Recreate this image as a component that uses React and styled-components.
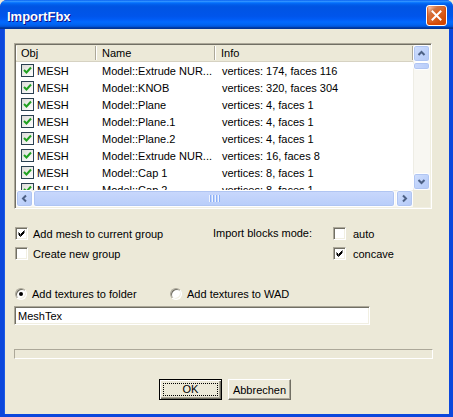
import React from "react";
import styled, { createGlobalStyle } from "styled-components";

const Global = createGlobalStyle`
  html, body { margin: 0; padding: 0; background: #ECE9D8; }
  body {
    font-family: "Liberation Sans", Arial, sans-serif;
    font-size: 11px;
    color: #000;
  }
`;

const FACE = "#ECE9D8";
const SHADOW = "#ACA899";
const DARK = "#716F64";

const Window = styled.div`
  width: 453px;
  height: 417px;
  box-sizing: border-box;
  display: flex;
  flex-direction: column;
  border-radius: 7px 7px 0 0;
  overflow: hidden;
  background: #0831d9;
`;

const TitleBar = styled.div`
  height: 29px;
  flex: none;
  box-sizing: border-box;
  display: flex;
  align-items: center;
  justify-content: space-between;
  padding: 1px 6px 0 7px;
  background: linear-gradient(
    to bottom,
    #0058ee 0%,
    #3593ff 4%,
    #288eff 6%,
    #127dff 8%,
    #036ffc 10%,
    #0262ee 14%,
    #0057e5 20%,
    #0054e3 24%,
    #0055eb 56%,
    #005bf5 66%,
    #026afe 76%,
    #0062ef 86%,
    #0052d6 92%,
    #0040ab 94%,
    #003092 100%
  );
`;

const Title = styled.span`
  font: bold 13px "Liberation Sans", Arial, sans-serif;
  color: #fff;
  text-shadow: 1px 1px #0f1089;
  margin-top: 2px;
`;

const CloseButton = styled.div`
  width: 21px;
  height: 21px;
  box-sizing: border-box;
  border: 1px solid #fff;
  border-radius: 3px;
  display: flex;
  align-items: center;
  justify-content: center;
  background: radial-gradient(
    circle at 90% 90%,
    #cc4600 0%,
    #dc6527 55%,
    #cd7546 70%,
    #ffccb2 90%,
    #fff 100%
  );
  box-shadow: inset 0 -1px 2px 1px #da4600;
`;

const Client = styled.div`
  flex: 1;
  background: ${FACE};
  border-style: solid;
  border-color: #0b47dc;
  border-width: 0 4px 3px 4px;
  box-shadow: inset 1px 0 #1a5ae6;
  padding: 14px 17px 0 10px;
  display: flex;
  flex-direction: column;
`;

/* ---------- list view ---------- */

const ListView = styled.div`
  width: 418px;
  height: 166px;
  box-sizing: border-box;
  border-style: solid;
  border-width: 1px;
  border-color: ${SHADOW} #fff #fff ${SHADOW};
  box-shadow: inset 1px 1px ${DARK}, inset -1px -1px #f1efe2;
  padding: 1px;
  display: grid;
  grid-template-columns: 1fr 17px;
  grid-template-rows: 1fr 17px;
  background: #fff;
`;

const Table = styled.div`
  overflow: hidden;
  background: #fff;
`;

const COLS = "80px 119px 198px";

const HeaderRow = styled.div`
  display: grid;
  grid-template-columns: ${COLS};
  height: 17px;
  box-sizing: border-box;
  background: ${FACE};
  border-bottom: 1px solid #d6d2c2;
`;

const HeaderCell = styled.div`
  display: flex;
  align-items: center;
  padding-left: ${(p) => p.$pad}px;
  border-right: 1px solid ${SHADOW};
  box-shadow: inset 1px 0 #fff;
  margin: 1px 0;
`;

const Row = styled.div`
  display: grid;
  grid-template-columns: ${COLS};
  height: 17px;
  align-items: center;
`;

const Cell = styled.div`
  display: flex;
  align-items: center;
  gap: 3px;
  padding-left: ${(p) => p.$pad}px;
  white-space: nowrap;
  overflow: hidden;
`;

const ListCheck = styled.span`
  width: 13px;
  height: 13px;
  flex: none;
  box-sizing: border-box;
  border: 1px solid #2a4050;
  background: linear-gradient(135deg, #dcdcd7, #fff);
  display: flex;
  align-items: center;
  justify-content: center;
`;

/* ---------- scroll bars ---------- */

const VScroll = styled.div`
  display: flex;
  flex-direction: column;
  background: #f8f7f2;
  box-shadow: inset 1px 0 #eeede5;
`;

const HScroll = styled.div`
  display: flex;
  background: #f8f7f2;
  box-shadow: inset 0 1px #eeede5;
`;

const Corner = styled.div`
  background: ${FACE};
`;

const ScrollButton = styled.div`
  width: 17px;
  height: 17px;
  flex: none;
  box-sizing: border-box;
  border: 1px solid #fff;
  display: flex;
  align-items: center;
  justify-content: center;
  border-radius: 3px;
  background: linear-gradient(135deg, #d2e0fd 0%, #c0d3fb 50%, #b4c8f6 100%);
  box-shadow: inset 0 0 0 1px #b0c5f2;
`;

const Thumb = styled.div`
  box-sizing: border-box;
  border: 1px solid #fff;
  border-radius: 3px;
  background: ${(p) =>
    p.$vertical
      ? "linear-gradient(to right, #c9d8fc, #b8cdfa)"
      : "linear-gradient(to bottom, #c9d8fc, #b8cdfa)"};
  box-shadow: inset 0 0 0 1px #b0c5f2;
  display: flex;
  align-items: center;
  justify-content: center;
  gap: 1px;
  ${(p) =>
    p.$vertical
      ? "height: 8px; width: 17px;"
      : "flex: 1; height: 17px; margin-right: 1px;"}
`;

const Grip = styled.span`
  width: 1px;
  height: 7px;
  background: #eef4fe;
  box-shadow: 1px 0 #8cb0f8;
  margin-right: 1px;
`;

const Track = styled.div`
  flex: 1;
`;

/* ---------- option controls ---------- */

const Options = styled.div`
  display: flex;
  margin-top: 18px;
  margin-left: 1px;
`;

const Column = styled.div`
  display: flex;
  flex-direction: column;
  gap: 7px;
  width: ${(p) => (p.$width ? `${p.$width}px` : "auto")};
`;

const GroupLabel = styled.div`
  width: 120px;
  height: 13px;
  line-height: 13px;
`;

const CheckField = styled.label`
  display: flex;
  align-items: center;
  gap: ${(p) => p.$gap}px;
  height: 13px;
  white-space: nowrap;
`;

const ClassicBox = styled.span`
  width: 13px;
  height: 13px;
  flex: none;
  box-sizing: border-box;
  background: #fff;
  border-style: solid;
  border-width: 1px;
  border-color: ${SHADOW} #fff #fff ${SHADOW};
  box-shadow: inset 1px 1px ${DARK}, inset -1px -1px #f1efe2;
  display: flex;
  align-items: center;
  justify-content: center;
`;

const RadioRow = styled.div`
  display: flex;
  margin-top: 28px;
  margin-left: 1px;
  height: 12px;
`;

const RadioField = styled.label`
  display: flex;
  align-items: center;
  gap: 5px;
  width: ${(p) => p.$width}px;
  white-space: nowrap;
`;

const RadioCircle = styled.span`
  width: 12px;
  height: 12px;
  flex: none;
  box-sizing: border-box;
  border-radius: 50%;
  background: #fff;
  border-style: solid;
  border-width: 1px;
  border-color: ${SHADOW} #fff #fff ${SHADOW};
  box-shadow: inset 1px 1px ${DARK}, inset -1px -1px #f1efe2;
  display: flex;
  align-items: center;
  justify-content: center;
`;

const RadioDot = styled.span`
  width: 4px;
  height: 4px;
  border-radius: 50%;
  background: #000;
`;

const TextInput = styled.div`
  margin-top: 6px;
  width: 356px;
  height: 19px;
  box-sizing: border-box;
  background: #fff;
  border-style: solid;
  border-width: 1px;
  border-color: ${SHADOW} #fff #fff ${SHADOW};
  box-shadow: inset 1px 1px ${DARK}, inset -1px -1px #f1efe2;
  padding-left: 3px;
  display: flex;
  align-items: center;
`;

const Progress = styled.div`
  margin-top: 24px;
  width: 419px;
  height: 10px;
  box-sizing: border-box;
  border-style: solid;
  border-width: 1px;
  border-color: ${SHADOW} #fff #fff ${SHADOW};
`;

const ButtonRow = styled.div`
  display: flex;
  justify-content: center;
  gap: 6px;
  margin-top: 20px;
  padding-left: 4px;
`;

const Button = styled.div`
  width: 63px;
  height: 21px;
  box-sizing: border-box;
  display: flex;
  align-items: center;
  justify-content: center;
  background: ${FACE};
  ${(p) =>
    p.$default
      ? `border: 1px solid #000;
         box-shadow: inset 1px 1px #fff, inset -1px -1px ${DARK}, inset -2px -2px ${SHADOW};`
      : `border-style: solid; border-width: 1px;
         border-color: #fff ${DARK} ${DARK} #fff;
         box-shadow: inset -1px -1px ${SHADOW};`}
`;

const FocusRing = styled.span`
  flex: 1;
  align-self: stretch;
  margin: 3px;
  border: 1px dotted #000;
  display: flex;
  align-items: center;
  justify-content: center;
  line-height: 1;
`;

/* ---------- small drawings ---------- */

const CloseGlyph = () => (
  <svg width="11" height="11" viewBox="0 0 11 11">
    <path d="M1.5 1.5 L9.5 9.5 M9.5 1.5 L1.5 9.5" stroke="#fff" strokeWidth="2" strokeLinecap="square" />
  </svg>
);

const GreenTick = () => (
  <svg width="9" height="9" viewBox="0 0 9 9">
    <path d="M1 4 L3.5 6.5 L8 1.5" stroke="#21a121" strokeWidth="2" fill="none" />
  </svg>
);

const BlackTick = () => (
  <svg width="7" height="7" viewBox="0 0 7 7">
    <path d="M0.5 2.5 L2.5 4.5 L6.5 0.5 M0.5 3.5 L2.5 5.5 L6.5 1.5 M0.5 4.5 L2.5 6.5 L6.5 2.5" stroke="#000" strokeWidth="1" fill="none" />
  </svg>
);

const Arrow = ({ dir }) => {
  const paths = {
    up: "M1.5 6 L4.5 3 L7.5 6",
    down: "M1.5 3 L4.5 6 L7.5 3",
    left: "M6 1.5 L3 4.5 L6 7.5",
    right: "M3 1.5 L6 4.5 L3 7.5",
  };
  return (
    <svg width="9" height="9" viewBox="0 0 9 9">
      <path d={paths[dir]} stroke="#4d6185" strokeWidth="2" fill="none" />
    </svg>
  );
};

const Check = ({ checked, gap, children }) => (
  <CheckField $gap={gap}>
    <ClassicBox>{checked && <BlackTick />}</ClassicBox>
    {children}
  </CheckField>
);

const Radio = ({ checked, width, children }) => (
  <RadioField $width={width}>
    <RadioCircle>{checked && <RadioDot />}</RadioCircle>
    {children}
  </RadioField>
);

const meshes = [
  ["Model::Extrude NUR...", "vertices: 174, faces 116"],
  ["Model::KNOB", "vertices: 320, faces 304"],
  ["Model::Plane", "vertices: 4, faces 1"],
  ["Model::Plane.1", "vertices: 4, faces 1"],
  ["Model::Plane.2", "vertices: 4, faces 1"],
  ["Model::Extrude NUR...", "vertices: 16, faces 8"],
  ["Model::Cap 1", "vertices: 8, faces 1"],
  ["Model::Cap 2", "vertices: 8, faces 1"],
];

export default function App() {
  return (
    <>
      <Global />
      <Window>
        <TitleBar>
          <Title>ImportFbx</Title>
          <CloseButton>
            <CloseGlyph />
          </CloseButton>
        </TitleBar>
        <Client>
          <ListView>
            <Table>
              <HeaderRow>
                <HeaderCell $pad={5}>Obj</HeaderCell>
                <HeaderCell $pad={6}>Name</HeaderCell>
                <HeaderCell $pad={6}>Info</HeaderCell>
              </HeaderRow>
              {meshes.map(([name, info], i) => (
                <Row key={i}>
                  <Cell $pad={5}>
                    <ListCheck>
                      <GreenTick />
                    </ListCheck>
                    MESH
                  </Cell>
                  <Cell $pad={6}>{name}</Cell>
                  <Cell $pad={7}>{info}</Cell>
                </Row>
              ))}
            </Table>
            <VScroll>
              <ScrollButton>
                <Arrow dir="up" />
              </ScrollButton>
              <Thumb $vertical />
              <Track />
              <ScrollButton>
                <Arrow dir="down" />
              </ScrollButton>
            </VScroll>
            <HScroll>
              <ScrollButton>
                <Arrow dir="left" />
              </ScrollButton>
              <Thumb>
                <Grip />
                <Grip />
                <Grip />
                <Grip />
              </Thumb>
              <ScrollButton>
                <Arrow dir="right" />
              </ScrollButton>
            </HScroll>
            <Corner />
          </ListView>

          <Options>
            <Column $width={198}>
              <Check checked gap={5}>Add mesh to current group</Check>
              <Check gap={5}>Create new group</Check>
            </Column>
            <GroupLabel>Import blocks mode:</GroupLabel>
            <Column>
              <Check gap={7}>auto</Check>
              <Check checked gap={7}>concave</Check>
            </Column>
          </Options>

          <RadioRow>
            <Radio checked width={155}>Add textures to folder</Radio>
            <Radio width={160}>Add textures to WAD</Radio>
          </RadioRow>

          <TextInput>MeshTex</TextInput>

          <Progress />

          <ButtonRow>
            <Button $default>
              <FocusRing>OK</FocusRing>
            </Button>
            <Button>Abbrechen</Button>
          </ButtonRow>
        </Client>
      </Window>
    </>
  );
}
